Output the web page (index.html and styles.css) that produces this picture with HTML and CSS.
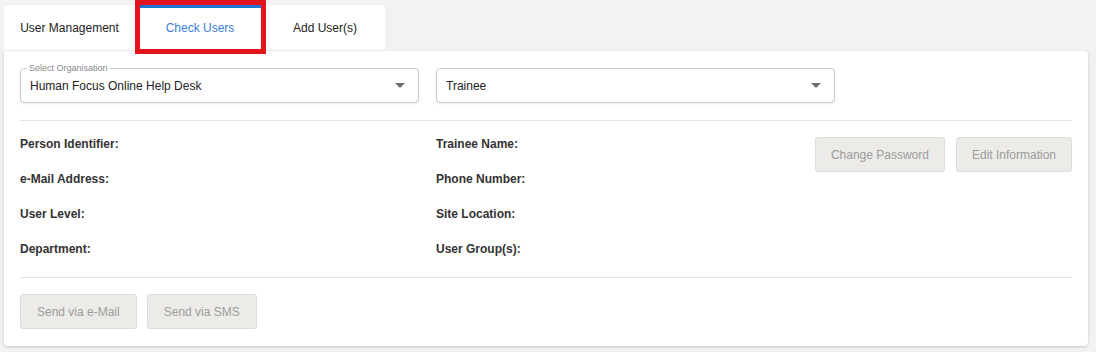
FILE: index.html
```html
<!DOCTYPE html>
<html lang="en">

<head>
  <meta charset="UTF-8">
  <meta name="viewport" content="width=device-width, initial-scale=1">
  <title>Check Users</title>
  <link rel="stylesheet" href="styles.css">
</head>

<body>
  <div class="tabs">
    <div class="tab tab-manage">User Management</div>
    <div class="tab tab-check active">Check Users</div>
    <div class="tab tab-add">Add User(s)</div>
  </div>

  <div class="card">
    <div class="selects">
      <div class="select">
        <span class="select-label">Select Organisation</span>
        <span class="select-value">Human Focus Online Help Desk</span>
        <span class="arrow"></span>
      </div>
      <div class="select">
        <span class="select-value">Trainee</span>
        <span class="arrow"></span>
      </div>
    </div>

    <div class="info">
      <div class="fields">
        <div class="field">Person Identifier:</div>
        <div class="field">Trainee Name:</div>
        <div class="field">e-Mail Address:</div>
        <div class="field">Phone Number:</div>
        <div class="field">User Level:</div>
        <div class="field">Site Location:</div>
        <div class="field">Department:</div>
        <div class="field">User Group(s):</div>
      </div>
      <div class="actions">
        <button class="btn" disabled>Change Password</button>
        <button class="btn" disabled>Edit Information</button>
      </div>
    </div>

    <div class="footer">
      <button class="btn" disabled>Send via e-Mail</button>
      <button class="btn" disabled>Send via SMS</button>
    </div>
  </div>
</body>

</html>
```

FILE: styles.css
```css
:root {
  --bg: #f3f2f1;
  --line: #e2e2e2;
  --blue: #1976d2;
  --radius: 4px;
}

*,
*::before,
*::after {
  box-sizing: border-box;
}

body {
  margin: 0;
  padding: 5px 8px 0 4px;
  font-family: "Liberation Sans", Arial, sans-serif;
  font-size: 12px;
  color: #222;
  background: var(--bg);
  width: 1096px;
  height: 352px;
  overflow: hidden;
}

.tabs {
  display: flex;
  width: 381px;
  height: 45px;
  background: #fff;
  border-radius: var(--radius) var(--radius) 0 0;
}

.tab {
  display: flex;
  align-items: center;
  justify-content: center;
  height: 100%;
  color: #222;
}

.tab-manage {
  width: 131px;
}

.tab-check {
  width: 130px;
}

.tab-add {
  width: 120px;
}

.tab.active {
  position: relative;
  color: #3b7dd8;
  border-top: 3px solid var(--blue);
  padding-bottom: 3px;
}

/* red highlight drawn over the selected tab */
.tab.active::after {
  content: "";
  position: absolute;
  left: 0;
  top: -8px;
  width: 131px;
  height: 54px;
  border: 5px solid #e3141e;
  border-top-width: 5px;
}

.card {
  margin-top: 1px;
  width: 1084px;
  height: 295px;
  background: #fff;
  border-radius: 0 var(--radius) var(--radius) var(--radius);
  box-shadow: 0 1px 3px rgba(0, 0, 0, .18);
  padding: 17px 16px 16px;
}

.selects {
  display: flex;
  gap: 17px;
  padding-bottom: 17px;
  border-bottom: 1px solid var(--line);
}

.select {
  position: relative;
  display: flex;
  align-items: center;
  width: 399px;
  height: 35px;
  padding: 0 10px 0 9px;
  border: 1px solid #cacaca;
  border-radius: var(--radius);
  box-shadow: 0 1px 2px rgba(0, 0, 0, .08);
  background: #fff;
}

.select-label {
  position: absolute;
  left: 6px;
  top: -6px;
  padding: 0 2px;
  background: #fff;
  font-size: 9px;
  line-height: 10px;
  color: #888;
}

.select-value {
  flex: 1;
  color: #222;
}

.arrow {
  width: 0;
  height: 0;
  margin-right: 3px;
  border-left: 5px solid transparent;
  border-right: 5px solid transparent;
  border-top: 5px solid #707070;
}

.info {
  display: flex;
  justify-content: space-between;
  padding: 16px 0 21px;
  border-bottom: 1px solid var(--line);
}

.fields {
  display: grid;
  grid-template-columns: 416px 300px;
  row-gap: 21px;
}

.field {
  font-weight: bold;
  color: #333;
  line-height: 14px;
}

.actions {
  display: flex;
  gap: 11px;
  align-items: flex-start;
}

.btn {
  height: 35px;
  padding: 0 15px;
  font-family: inherit;
  font-size: 12px;
  color: #9c9c9c;
  background: #ecebe8;
  border: 1px solid #dcdcda;
  border-radius: 3px;
}

.footer {
  display: flex;
  gap: 10px;
  padding-top: 16px;
}

.footer .btn {
  padding: 0 16px;
}
```
